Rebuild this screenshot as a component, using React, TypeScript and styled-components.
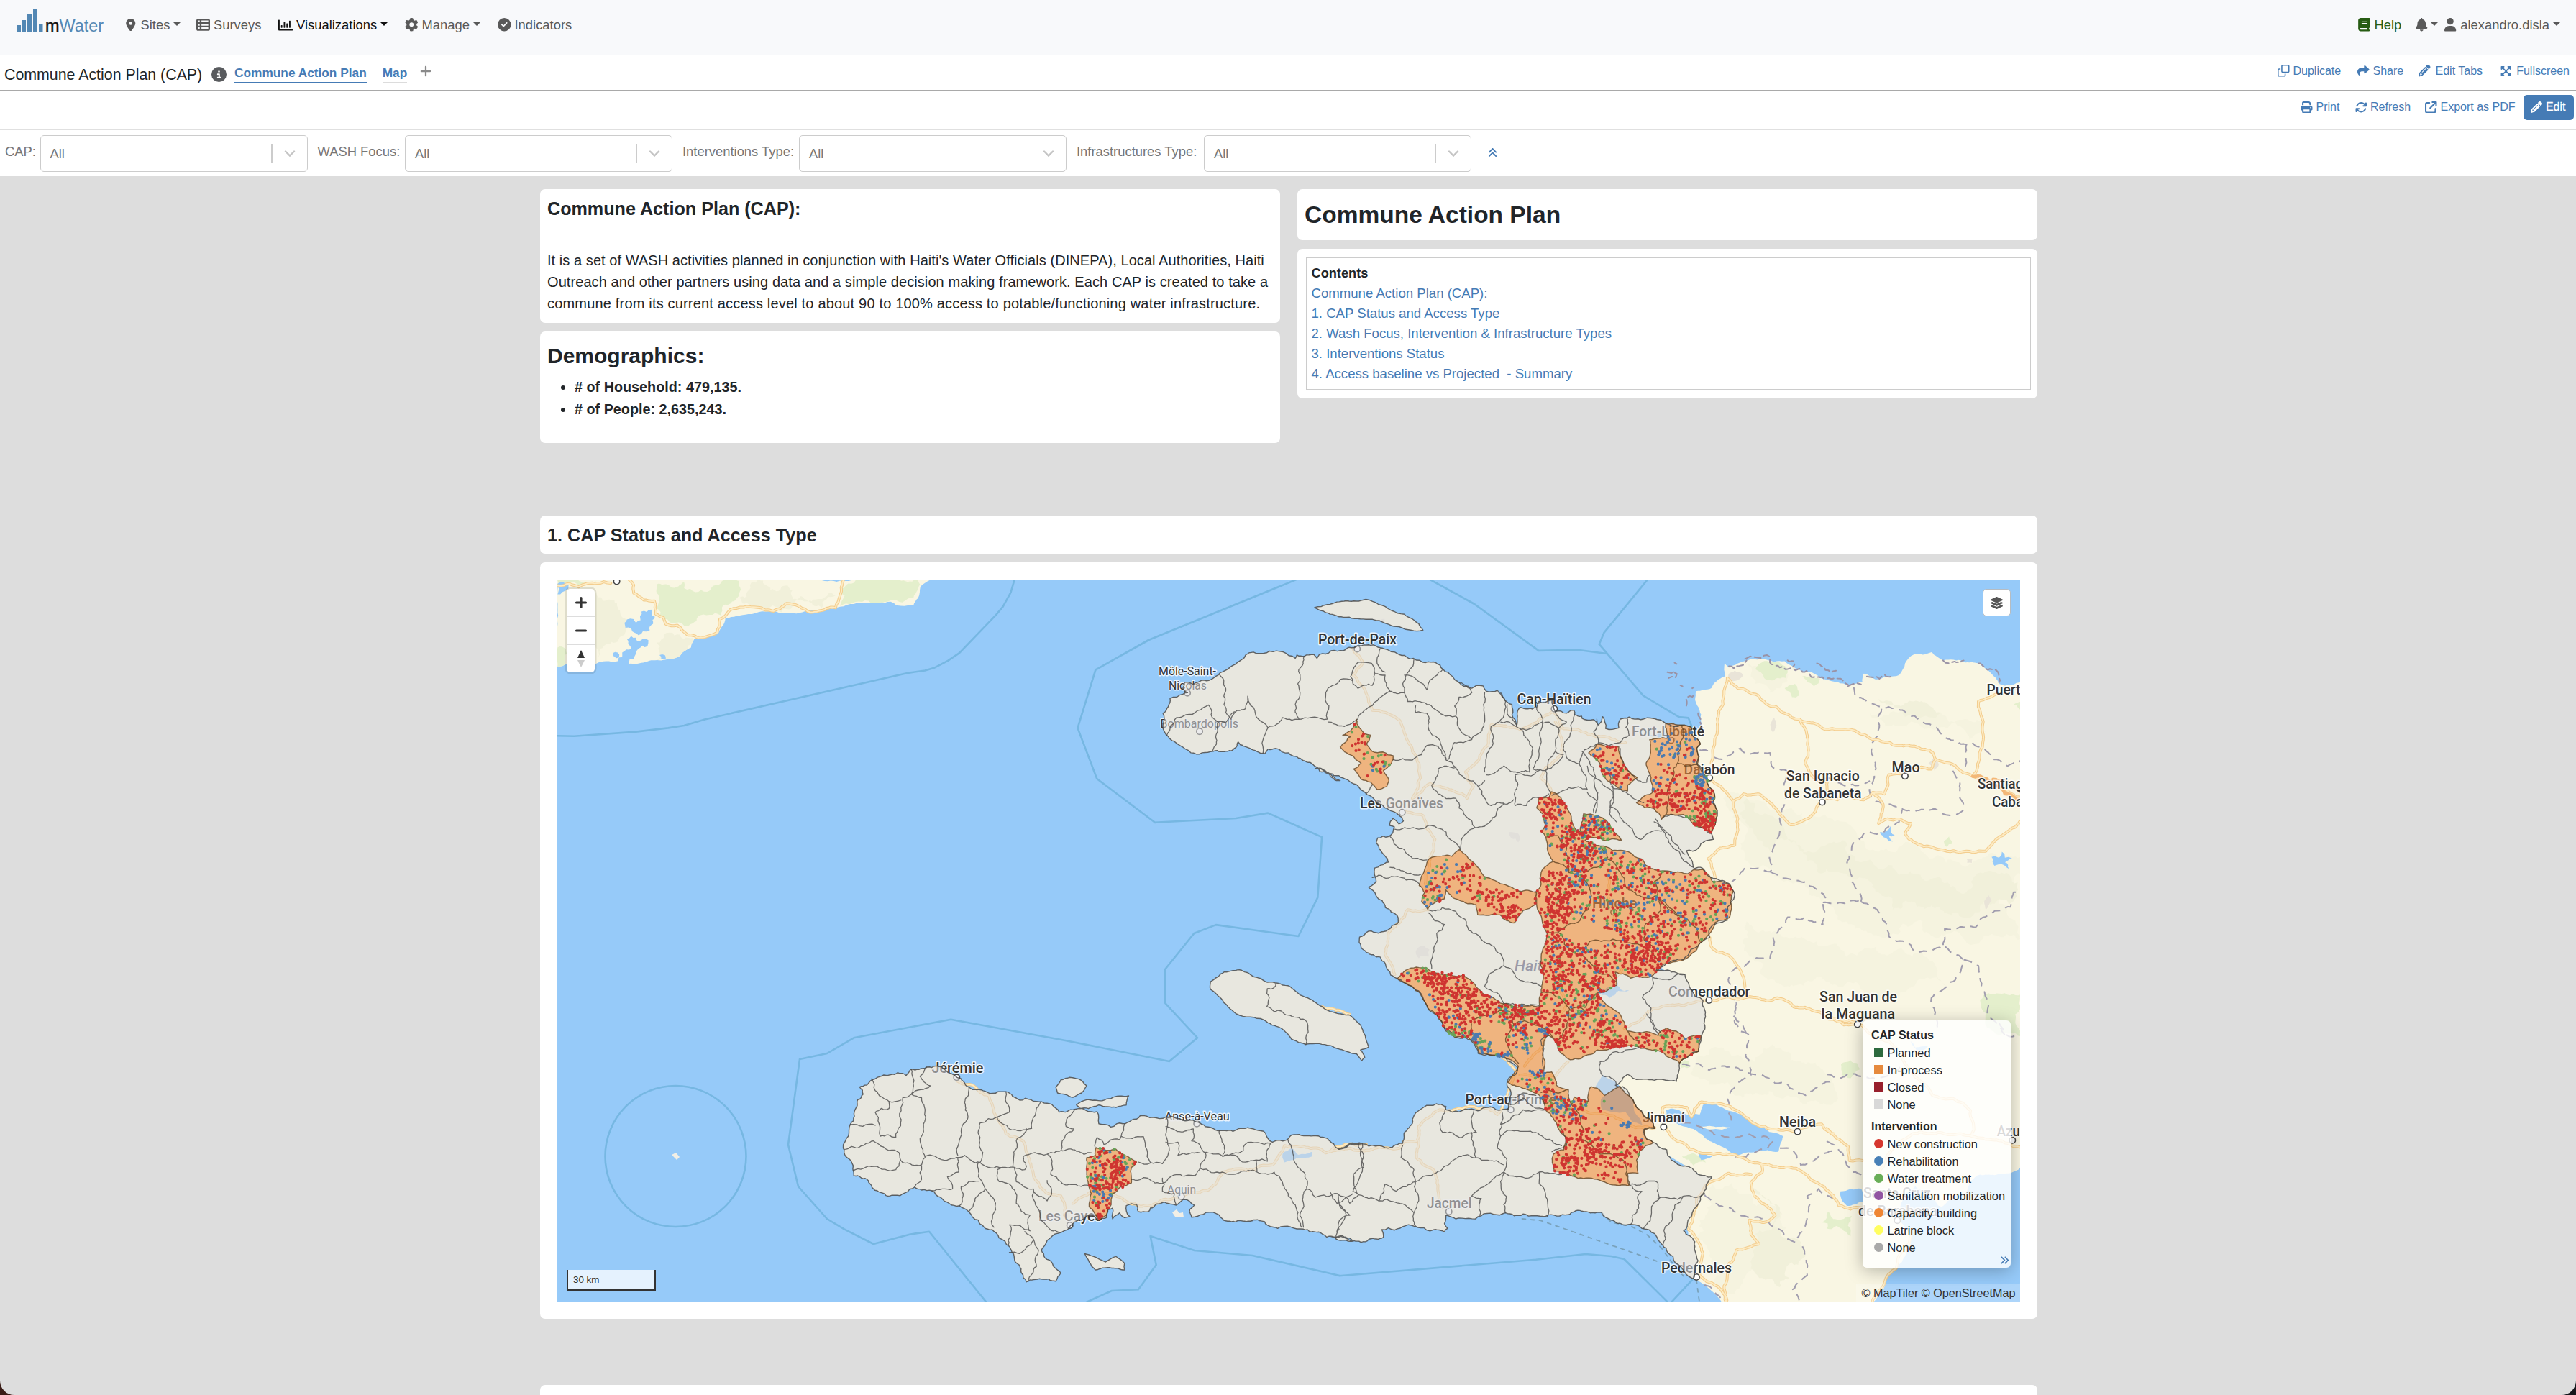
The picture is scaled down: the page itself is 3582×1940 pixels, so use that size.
import React from "react";
import styled, { createGlobalStyle, css } from "styled-components";
import {
  FaLocationDot, FaTableList, FaGear, FaCircleCheck, FaBook, FaBell, FaUser, FaRegClone, FaShare,
  FaPencil, FaPrint, FaArrowsRotate, FaArrowUpRightFromSquare, FaPlus, FaCircleInfo, FaAnglesUp,
  FaAnglesRight, FaLayerGroup,
} from "react-icons/fa6";
import { FaRegChartBar, FaExpandArrowsAlt } from "react-icons/fa";

/* ------------------------------------------------------------------ */
/* Map geometry                                                        */
/* ------------------------------------------------------------------ */

type Pt = [number, number];
type Sheet = (s: string) => Pt[];

const sheet = (ox: number, oy: number, sx: number, sy: number): Sheet => (s) =>
  s.trim().split(/\s+/).map((p) => {
    const [x, y] = p.split(",").map(Number);
    return [ox + x / sx, oy + y / sy] as Pt;
  });

const W = sheet(760, 780, 1.568, 2.904);
const N = sheet(1560, 800, 2.24, 2.45);
const E = sheet(2200, 800, 2.45, 2.45);
const C = sheet(1800, 1050, 2.3758, 2.45);
const S = sheet(1150, 1340, 2.0907, 3);
const P = sheet(1850, 1380, 2.24, 3);
const L = sheet(2540, 1380, 3, 2.8);

const hash = (a: number, b: number) => {
  const v = Math.sin(a * 12.9898 + b * 78.233) * 43758.5453;
  return v - Math.floor(v);
};

// Midpoint displacement, so that coasts and borders get their ragged look.
const split = (a: Pt, b: Pt, amp: number, out: Pt[]) => {
  const dx = b[0] - a[0];
  const dy = b[1] - a[1];
  const len = Math.hypot(dx, dy);
  if (len < 5) {
    out.push(b);
    return;
  }
  const k = (hash(a[0] + b[0], a[1] + b[1]) - 0.5) * amp;
  const m: Pt = [(a[0] + b[0]) / 2 - dy * k, (a[1] + b[1]) / 2 + dx * k];
  split(a, m, amp, out);
  split(m, b, amp, out);
};

const rough = (pts: Pt[], amp = 0.32, closed = false) => {
  const out: Pt[] = [pts[0]];
  for (let i = 1; i < pts.length; i++) split(pts[i - 1], pts[i], amp, out);
  if (closed) split(pts[pts.length - 1], pts[0], amp, out);
  return out;
};

const d = (pts: Pt[], closed = false) =>
  "M" + pts.map((p) => `${p[0].toFixed(1)} ${p[1].toFixed(1)}`).join("L") + (closed ? "Z" : "");
const area = (pts: Pt[], amp = 0.3) => d(rough(pts, amp, true), true);
const lines = (sh: Sheet, list: string[], amp = 0.32) => list.map((s) => d(rough(sh(s), amp))).join("");
const areas = (sh: Sheet, list: string[], amp = 0.4) => list.map((s) => area(sh(s), amp)).join("");

const mainland: Pt[] = [
  ...N("195,365 223,372 250,357 300,340 330,320 360,297 385,272 410,262 440,266 520,274 540,283 545,272 568,276 598,270 608,283 615,270 690,257 715,247 735,240 760,238 790,240 805,247 850,262 880,273 908,283 945,298 978,298 1000,320 1030,345 1050,365 1065,378 1090,385 1105,375 1125,377 1135,395 1170,392 1190,418 1215,440 1215,475 1230,512 1240,450 1265,455 1292,450 1298,430 1340,425 1350,465 1385,470 1408,460 1410,475 1432,480"),
  ...E("0,488 40,492 55,510 70,482 80,522 125,520 130,490 160,483 200,492 285,505 340,511 372,518 375,545 403,575 390,590 392,645 405,655 425,690 432,720 448,735 452,760 445,775 460,800 455,840 440,878 447,900 420,905 395,930 355,938 362,955 382,1000 410,998 440,1030 500,1050 518,1080 510,1110 495,1130 495,1175 460,1185 435,1205 435,1235 400,1255 370,1275 345,1310 310,1312 280,1330 250,1350 290,1345 350,1360 365,1400 385,1435 412,1450"),
  ...C("1355,900 1345,955 1335,1010 1285,1035 1272,1050 1268,1085 1262,1112 1190,1108 1140,1105 1100,1088 1075,1115 1060,1125 1085,1130 1115,1170 1130,1200 1185,1255 1190,1272 1155,1275 1165,1310 1185,1320 1230,1345 1245,1380 1290,1400"),
  ...P("1188,770 1162,838 1130,910 1100,995 1135,1040 1145,1120 1130,1195 1075,1130 1050,1085 1035,1055 970,985 930,968 885,955 845,918 790,915 740,928 670,935 600,925 545,920 470,932 390,945 360,930 355,965 365,985 355,1000 310,995 270,980 200,992 160,990 165,1022 120,1030 95,1043 50,1035 0,1018"),
  ...S("1530,1158 1480,1145 1430,1120 1385,1108 1310,1105 1230,1075 1145,1060 1130,1042 1060,1058 1055,1025 1068,1008 1035,985 1015,1008 980,995 940,1020 935,1035 905,1035 900,1005 870,1010 880,1055 865,1060 850,1040 830,1065 830,1020 815,1025 812,1060 790,1072 770,1050 740,1070 705,1100 672,1125 640,1155 623,1195 655,1250 680,1290 665,1325 580,1328 565,1290 545,1235 530,1180 500,1145 480,1110 440,1070 412,1035 385,1010 330,975 305,948 275,945 255,932 195,967 150,952 120,905 78,885 72,830 47,770 62,720 68,670 85,600 105,545 95,515 130,485 165,465 205,455 230,467 245,440 290,432 345,445 378,475 412,515 460,533 520,535 560,570 625,577 675,620 720,608 785,618 790,668 860,668 910,635 985,640 1050,655 1100,680 1130,695 1180,700 1215,688 1275,708 1295,745 1325,740 1345,722 1400,718 1455,730 1490,775 1520,750 1555,752"),
  ...P("25,655 60,632 100,632 180,650 225,630 240,570 260,515 290,480 330,465 355,475 360,490 440,487 490,480 525,492 555,490 560,445 550,378 580,335 583,312 570,298 500,262 460,255 450,220 420,185 390,187 355,150"),
  ...C("470,885 430,840 390,790 340,762 318,750 300,710 260,680 220,655 215,620 245,600 310,595 340,575 340,548 300,520 270,480 245,450 270,430 265,385 285,375 310,365 285,325 270,300 275,282 310,278 325,265 330,245 315,240 325,215 345,235 360,225 345,205 310,185 270,160 240,135 190,95 130,70 70,45"),
  ...N("680,700 640,675 600,650 560,628 520,605 480,590 455,592 445,608 400,590 362,568 350,590 330,600 285,600 250,605 215,605 180,580 145,550 128,510 128,470 150,420 190,405 205,400 190,385"),
];

const islands: Pt[][] = [
  N("600,110 640,100 700,87 760,82 800,100 880,133 925,165 938,187 900,187 840,172 760,150 690,143 635,127"),
  [
    ...S("1115,75 1155,35 1205,28 1240,55 1280,78 1310,82 1340,92 1390,140 1440,180 1520,215 1550,255"),
    ...C("235,965 245,995 218,1005 232,1030 222,1042 205,1018 180,1012 120,990 40,985"),
    ...S("1392,338 1350,315 1320,270 1270,235 1190,210 1145,145 1115,108"),
  ],
  S("665,515 680,485 705,475 740,488 755,510 740,540 715,558 690,545 670,540"),
  S("725,590 755,568 800,572 850,553 877,552 870,590 840,600 790,590 760,605 735,605"),
  S("748,1208 775,1222 810,1245 840,1222 865,1250 865,1278 780,1278 762,1245"),
];

const haitiPath = area(mainland, 0.3) + islands.map((i) => area(i, 0.16)).join("");

const cubaPath = area(
  W("20,60 840,60 835,78 815,105 810,150 800,180 780,182 765,180 750,165 700,170 640,185 610,195 570,200 545,213 525,212 500,205 440,215 390,232 385,260 375,290 345,310 322,315 315,350 290,385 250,402 180,415 180,385 158,390 155,405 130,405 108,415 24,427"),
  0.15
);

const dominicanPath = d([
  ...rough(E("372,518 405,540 412,520 405,490 400,460 385,425 388,395 440,385 485,345 485,300 500,315 560,290 620,285 690,293 750,330 830,355 910,375 955,365 960,335 1000,355 1080,340 1100,300 1130,270 1190,262 1230,290 1300,295 1350,300 1390,330 1420,370 1500,365"), 0.2),
  ...rough(L("820,675 760,705 700,712 640,710 600,735 580,785 530,795 480,835 465,830 430,790 370,755 320,790 300,880 350,950 330,1020 290,1075 245,1115 240,1150 185,1215"), 0.2),
  ...P("1225,1305 1215,1285 1200,1260 1165,1220 1130,1190 1110,950"),
  ...C("1340,1430 1150,1310 1140,1240 1040,1175 1050,1080 1240,1070 1300,900"),
  ...E("330,1390 240,1310 340,1220 400,1100 360,1010 330,930 430,860 415,760 375,640 345,560"),
], true);

const lakes =
  areas(P, [
    "1045,490 1060,485 1085,490 1110,510 1150,510 1160,470 1180,462 1260,500 1330,550 1410,600 1395,665 1260,682 1180,620 1130,570 1090,555 1050,525",
    "825,395 850,345 885,370 900,390 945,450 945,490 970,550 990,565 940,540 920,500 880,500 845,490 843,445 855,430",
    "1145,670 1190,685 1155,700",
  ], 0.15) +
  areas(E, [
    "1015,875 1035,872 1050,855 1052,875 1065,885 1045,888 1058,908 1035,895",
    "1395,960 1420,962 1430,942 1440,962 1465,965 1440,978 1455,1000 1430,985 1405,990",
    "60,1425 110,1405 120,1385 130,1410 160,1415 95,1440",
    "230,545 280,540 300,548 320,560 290,560",
  ]) +
  areas(S, ["1325,790 1350,770 1370,798 1410,785 1410,805 1370,810 1328,830"], 0.2) +
  areas(L, ["58,775 145,765 150,815 85,832 60,800", "350,190 370,215 430,205 405,225 375,225"], 0.2) +
  areas(W, [
    "170,250 175,237 190,235 195,250 205,240 207,205 228,197 230,220 236,225 225,280 210,285 200,300 185,275 172,270",
    "175,315 195,310 200,325 222,320 220,345 200,355 195,375 190,395 160,405 165,370 185,355 178,335",
    "145,372 155,370 158,390 148,388", "246,380 258,380 260,395 250,397", "24,92 48,98 30,135 24,135",
  ], 0.5);

const lakeIsle = areas(P, ["1150,560 1200,562 1245,563 1220,573 1180,572"], 0.1);

const greens =
  areas(W, [
    "240,95 300,85 300,110 350,125 420,80 415,150 385,180 380,220 330,225 300,262 250,230 245,150",
    "640,120 680,75 810,75 800,150 750,160 640,182 650,140", "24,350 42,355 42,425 24,427", "24,78 110,78 90,95 24,97",
    "390,75 420,75 400,130 385,120",
  ]) +
  areas(E, [
    "590,320 620,292 660,295 700,325 695,350 640,358 620,350", "690,385 725,370 740,410 715,415",
    "750,345 810,352 790,378", "1232,905 1250,890 1262,915 1240,925", "1365,1480 1430,1435 1500,1425 1500,1568 1420,1568",
    "1470,440 1500,425 1500,460",
  ]) +
  areas(L, ["60,280 100,265 140,300 100,335 62,320", "0,880 60,885 105,870 100,950 40,910 0,920", "640,30 720,5 810,10 810,170 720,120 690,90 650,70"]) +
  areas(P, ["1095,685 1130,670 1170,710 1130,722", "1090,290 1118,288 1115,315 1092,315", "1530,960 1550,915 1568,950 1568,980", "1060,780 1080,765 1125,800 1100,815"]);

const hills =
  areas(E, [
    "560,300 640,310 700,360 640,400 590,370", "980,470 1100,440 1250,500 1380,540 1320,560 1180,520", "480,760 640,800 760,850 900,840 1000,940 1240,980 1492,960 1492,1240 1300,1240 1160,1180 1040,1230 900,1180 760,1060 600,1000 560,880",
    "560,1180 760,1240 900,1300 1160,1290 1240,1400 1100,1420 900,1390 700,1400 580,1300",
  ], 0.6) +
  areas(P, ["1180,240 1320,290 1480,300 1568,380 1568,460 1400,440 1250,400 1120,340", "1190,800 1300,840 1420,980 1340,1160 1260,1260 1180,1100 1150,950"], 0.6) +
  areas(W, ["60,150 110,140 160,200 150,330 110,400 60,300", "420,150 520,100 630,140 600,190 480,190", "240,330 320,310 300,380 240,400"], 0.6);

const hills2 =
  areas(E, [
    "700,900 900,910 1010,1000 1180,1040 1400,1010 1480,1080 1330,1160 1140,1130 1000,1080 860,1010",
    "1010,420 1130,430 1220,470 1140,480", "560,760 650,820 700,900 640,940 570,860",
  ], 0.6) + areas(P, ["1300,820 1400,900 1480,1100 1400,1230 1320,1100 1380,960"], 0.6);

const towns =
  areas(E, ["498,340 520,325 548,340 530,358 500,355", "1180,640 1210,620 1215,645 1200,665", "1370,1110 1385,1090 1395,1110 1375,1140", "1310,965 1330,965 1328,980 1312,980", "645,500 655,485 662,510 650,535"], 0.3) +
  areas(N, ["1205,875 1240,890 1235,910 1212,895", "918,1275 935,1262 958,1275 955,1300 925,1305", "790,150 818,148 815,162"], 0.4);

const roadsMain =
  lines(E, [
    "495,350 480,440 460,540 440,640", "495,350 530,385 600,410 690,470 740,490 830,525 1000,560 1080,580 1195,605 1205,628 1250,640 1330,685 1420,720 1500,760",
    "740,490 765,540 760,640 780,680 835,705 835,760", "820,770 790,810 710,850 690,830 640,775 600,745 550,745 515,770 490,738 440,700",
    "820,765 870,765 890,745 960,765 990,740 1030,745 1045,680 1100,678", "1100,655 1190,660 1205,628",
    "990,740 1025,780 1010,845 1040,830 1120,845 1100,880 1130,910 1200,930 1375,940 1410,900 1490,840",
    "515,770 530,850 520,920 470,930 430,965 455,1040", "435,1235 440,1265 500,1295 550,1370 555,1405",
    "432,1448 550,1440 630,1450 665,1440 720,1470 820,1495 940,1525", "1330,685 1365,570 1350,430 1410,405 1500,380",
  ], 0.22) +
  lines(P, [
    "1035,505 1035,480 1055,475 1110,480 1125,520 1150,460 1200,462 1260,490 1300,525 1370,570 1450,580 1530,550 1568,590",
    "1040,560 1080,620 1120,655 1270,685 1340,715 1430,730 1500,785 1568,850",
    "1340,715 1345,750 1310,795 1320,850 1385,930 1350,960 1305,950 1310,1010 1335,1050 1265,1075 1235,1150 1235,1300",
    "1310,760 1240,755 1185,790 1140,860 1115,990 1160,1090 1150,1180 1235,1285",
    "860,510 900,530 950,565 1010,565",
  ], 0.22) +
  lines(L, ["0,530 90,600 95,655 150,655", "0,770 50,830 150,840", "350,950 290,1075 245,1120 190,1210", "0,100 150,130 270,200 350,300 440,400 600,460 605,560 430,550 360,550 220,700", "605,560 700,575 760,590 820,600"], 0.22) +
  lines(W, [
    "172,60 190,98 190,130 212,158 235,162 238,215 255,230 260,255 285,260 310,300 345,308 372,290 378,235 400,198 460,188 495,203 523,172 575,208 610,192 630,190 640,140 648,75",
    "24,100 50,92 70,105 110,90 140,90",
  ], 0.2);

const roadsHaiti =
  lines(N, [
    "720,250 750,300 720,340 760,400 780,460 860,490 905,600 930,690 905,760", "905,760 960,710 1075,760 1095,720 1070,670 1140,580 1150,510 1240,525 1340,465 1370,520 1480,550 1568,570",
    "870,805 940,820 975,900 960,960 955,1080", "955,1140 890,1140 830,1220 820,1290 850,1360", "1340,740 1305,690 1320,655 1370,610 1350,500",
  ], 0.22) +
  lines(C, ["1035,390 1040,500 1060,590 1130,640", "880,740 900,850 830,935 760,1060", "1090,720 1060,760"], 0.25) +
  lines(P, [
    "0,665 60,650 90,660 215,650 230,620 270,620 275,560 340,490 520,510 580,330 510,250", "275,620 268,690 320,740 335,830 350,900",
    "590,345 700,350 740,290", "700,460 800,500 860,510 ", "915,150 990,80 1100,55 1170,35", "650,350 700,460",
  ], 0.22) +
  lines(S, [
    "378,490 470,550 485,620 520,710 570,740 590,830 625,940 680,970 690,1050", "1568,755 1450,790 1330,760 1295,840 1150,870 1130,920 1030,970 940,1010 880,1000 830,960 770,950 715,1000",
    "1440,180 1480,195 1520,212",
  ], 0.22);

const highway = lines(E, ["1330,685 1365,690 1420,720 1440,745 1500,780", "1400,695 1440,700 1500,740"]);

const adminDash =
  lines(E, [
    "925,380 930,415 1020,450 1110,475 1200,515 1290,575 1370,590 1450,650 1500,630", "1020,455 985,600 995,680 980,740 1000,770 1050,780 1100,800 1210,800 1275,815 1300,795 1285,700 1255,645",
    "1310,575 1305,660", "450,620 480,628 540,590 570,610 640,605 645,650 700,670 690,780 680,860 640,950 650,1000 640,1010 560,995 510,1045",
    "640,1010 730,1040 830,1100", "950,1112 915,1040 920,920 960,880 1010,880 1080,840 1090,800", "820,1115 950,1112", "820,1120 820,1190 700,1165 650,1230 640,1305 580,1310 520,1340 500,1370 525,1420 515,1500 560,1568",
    "950,1112 1020,1155 1045,1230 1120,1260 1140,1285 1230,1260 1300,1310 1290,1350 1190,1440 1210,1540", "1300,1310 1350,1330 1360,1400 1380,1490 1440,1568",
    "1230,1260 1235,1205 1340,1200 1390,1155 1460,1130 1470,1080 1500,1085", "780,680 860,700 900,720 980,700", "400,595 450,600",
  ], 0.3) +
  lines(P, [
    "1250,0 1260,130 1305,180 1310,345 1265,380 1250,540", "1095,300 1180,325 1290,330 1420,380 1480,430 1568,370", "1095,545 1150,560 1350,600 1380,620 1260,685",
    "1400,650 1440,660 1465,720 1568,665", "1165,845 1210,890 1270,925 1310,940 1400,990 1450,1045 1480,970 1485,850 1520,820 1568,860", "1470,1060 1485,1180 1440,1240 1460,1285",
    "1165,1220 1215,1275",
  ], 0.3) +
  lines(L, ["0,320 120,318 200,335 300,300 330,270", "0,580 40,600 80,660 110,700 150,720", "720,120 740,160 800,170"], 0.3);

const maritime =
  d(W("15,706 60,708 195,690 265,675 300,665 345,640 790,452 825,443 845,432 875,403 900,372 980,218 995,185 1012,128 1022,65")) +
  d([
    ...N("560,8 543,15 85,220 0,272"), ...W("1312,320 1197,440 1158,675 1200,880 1327,1057"),
    ...N("102,842 355,828 455,810 623,892 610,1098 550,1230 293,1191 225,1220 135,1342 135,1458"),
    ...S("1077,310 995,408 690,320 360,233 78,310 0,375"), [1112, 1473], [1096, 1592], [1110, 1650], ...S("0,1065 50,1108 135,1170 240,1130 297,1118 470,1425"),
  ]) +
  d([...N("940,0 960,15 1098,98 1298,257 1420,254 1510,267")]) +
  d(E("235,0 75,195 58,235 208,410 330,483 362,486 375,520")) +
  d([...S("735,1425 828,1365 905,1360 957,1257 940,1137 1068,1197 1237,1218 1490,1302"), ...P("28,1183 640,1115 795,1092 875,1101 915,1113 1060,1305")]) +
  d(P("1050,1310 1130,1195"));

const ferry = d(P("597,945 655,952 860,1048 1035,1130")) + d(P("845,920 875,960 935,975 985,1010 1030,1065 1060,1120 1110,1200")) + d(P("1140,1200 1150,1300"));

const reefs = lines(E, [
  "290,330 315,325 318,348 295,350", "315,298 322,302", "335,375 342,378", "375,385 380,382", "555,285 630,272 640,290", "700,290 725,300 718,312", "800,300 865,325",
  "355,445 385,400", "395,470 402,500 410,520", "640,288 740,318 830,352 905,372", "905,378 950,372", "970,345 1055,345", "500,310 560,290", "1230,290 1250,300 1300,290", "1350,300 1420,365",
], 0.6);

const borders =
  lines(N, [
    "303,337 318,440 340,490 360,460 385,455 392,412 410,450 425,490 455,520 440,605", "140,545 170,485 200,475 270,442 300,500 325,500 350,465", "300,500 283,598",
    "455,520 500,485 560,490 640,490", "568,276 548,370 555,400 540,440 552,490", "640,490 645,445 635,400 680,355 720,360",
    "735,297 778,300 788,335 780,375 735,385 720,370 712,345 735,297", "788,335 820,340 835,395 800,420 755,460 735,490 710,508 643,500",
    "805,250 795,300 820,330", "910,285 885,340 880,400 835,395", "1000,320 975,345 950,390 880,340",
    "880,400 890,430 950,440 1000,475 1040,480 1050,415 1090,400 1050,365", "915,445 915,468 950,470 955,520 985,555 1010,630 1040,655 1110,720 1130,700",
    "1040,480 1045,510 1090,560 1110,540 1130,480 1130,400", "1090,560 1035,570 1015,630", "1180,400 1195,430 1175,500 1150,515 1145,590 1130,670",
    "1180,500 1245,525 1265,560 1280,590 1270,670 1220,670 1190,650 1165,670 1135,680", "1310,505 1300,590 1280,660 1320,665 1350,600 1360,520 1330,500 1310,505",
    "1240,525 1310,500", "1230,512 1205,480 1200,440", "1292,450 1310,505", "1350,465 1385,500 1360,520", "1410,475 1395,550 1375,590 1385,620 1425,645 1440,595 1480,575", "1350,600 1375,610 1320,665 1335,740", "1425,645 1450,730 1340,750",
    "1450,740 1480,770 1470,810", "1450,650 1490,700 1530,740 1520,800 1540,840", "905,630 845,628", "905,630 950,580 985,583 1010,630", "760,745 780,715",
    "1040,655 985,660 965,715 985,745 1040,760 1070,820 1100,860 1060,895 1055,935", "1225,680 1225,785 1260,785 1330,745", "1110,720 1150,785 1200,780 1220,765",
    "1225,680 1300,665", "1190,775 1165,820 1130,855 1100,860", "850,865 880,860 925,865 950,855 1010,875 1055,935", "835,890 870,930 905,965 950,970",
    "835,995 880,1010 930,1020", "780,1030 800,1022 830,1032 870,1030 930,1060", "955,1150 1005,1190 975,1260 965,1340",
    "955,1140 1040,1145 1080,1210 1130,1250 1180,1290 1190,1330 1240,1380 1305,1400", "1190,1330 1140,1370 1130,1400", "1130,1400 1190,1460 1300,1468",
  ]) +
  lines(E, [
    "50,490 55,575", "155,490 160,545 130,570 50,575", "0,600 40,655 50,770 45,810", "130,590 150,660 190,700 220,705 232,680",
    "65,655 105,720 95,790 150,845 200,900 250,870 275,870", "100,720 150,740 210,775", "245,840 275,870 330,940 380,995", "250,830 260,855 330,930 350,950", "275,825 330,820 440,880",
    "350,1360 240,1370 235,1410 205,1440 235,1475 235,1500 260,1568",
  ]) +
  lines(P, [
    "360,475 340,545 350,585 455,585 440,540 447,490", "440,585 453,690 490,700 540,720", "225,640 220,690 260,740 265,790 300,765 400,685 453,690",
    "100,632 100,735 70,830 150,870 200,875 260,920", "265,790 205,830 170,800 150,870", "0,835 20,880 50,930 20,1000", "20,880 70,840",
    "265,790 275,870 260,920 270,980", "540,750 530,790 545,920", "440,850 470,860 465,930", "440,850 500,790 540,750", "540,750 580,770 650,750 670,840 675,935",
    "535,550 530,600 520,650 550,700 540,750", "530,600 600,580 660,600 720,640", "535,500 530,550 600,490 670,490", "650,750 720,760", "720,570 735,640 690,665",
    "930,800 970,830 960,900 935,968", "930,800 1020,795 1025,860 1000,910 975,985", "1020,860 1100,850 1165,838", "1100,850 1065,940 1035,1055",
    "550,440 600,420 640,430", "560,470 600,440 670,490", "840,290 880,250 960,230", "840,290 850,350 890,380", "985,90 1030,170", "655,340 655,200 680,180",
  ]) +
  lines(S, [
    "1305,82 1300,100 1280,105 1278,180 1300,200 1340,215 1390,235 1392,338",
    "245,440 250,520 245,545 220,560 215,600 205,700 200,725 155,720 140,620 180,605 180,575 140,530 130,480", "290,432 270,470 300,510 245,545 275,560 275,720 285,810 275,840 220,830 210,790 180,780 135,740 95,765 50,775",
    "68,672 140,675", "75,865 200,860 212,825", "180,575 215,570", "275,845 275,900 255,932", "412,515 400,580 410,640 390,700 380,800", "285,805 340,820 400,800 445,830",
    "380,810 382,870 350,890 365,940 305,948", "520,535 530,620 495,640 445,665 445,830", "495,640 530,690 595,688 620,580", "720,610 695,680 718,690 690,730 680,780",
    "445,830 510,850 575,860 570,805 640,795 680,780 770,790", "580,690 550,740 540,850", "440,830 440,890 460,940 490,1000 485,1100", "385,1010 390,930 440,908",
    "460,940 430,990 412,1035", "545,855 550,910 600,940 640,990 650,970 640,905", "510,850 495,860 500,910 530,920 550,1000 590,1050 590,1115", "672,1120 600,940", "590,1115 530,1090 527,1175", "575,1118 600,1150 615,1195 585,1325",
    "530,1205 560,1210 600,1155", "640,795 650,880 680,910 760,925", "780,770 785,725 805,755 850,735 855,720 865,670", "855,720 920,722 940,830 975,835 990,740 985,640",
    "905,828 940,832", "985,680 1065,690 1060,740 1100,790 1085,850 1070,885 885,900", "985,745 1020,745 1020,800 1085,790", "1140,697 1155,770 1150,805 1210,780 1215,755 1290,750 1280,825 1155,800",
    "1095,790 1150,805", "1085,855 1150,870 1250,870 1248,825", "1250,870 1300,870 1350,980 1380,1100", "975,895 975,950 1010,960 1015,1005",
    "1340,735 1360,830 1390,880 1395,940 1420,975 1485,960 1520,1000 1545,965", "1385,1100 1385,1000 1395,940", "1480,1145 1490,1070 1520,1050 1490,1010 1485,960", "1545,965 1530,880 1560,850 1545,750",
  ]);

const zones: Pt[][] = [
  N("730,490 740,520 755,540 775,545 762,575 780,600 845,615 840,640 815,665 832,700 825,720 795,730 775,705 745,695 722,660 745,640 700,605 680,585 712,550 688,545 712,530"),
  E("50,575 125,585 135,625 155,665 188,690 155,715 155,735 95,705 70,680 60,640 22,605"),
  E("285,505 340,510 372,518 375,545 403,575 390,590 392,645 425,690 432,720 448,735 452,760 445,775 460,800 455,840 440,878 380,850 345,815 285,815 270,832 245,795 185,775 215,750 240,740 235,690 218,640 232,610 230,560 290,555"),
  C("848,125 880,145 900,180 915,220 930,255 945,262 955,200 1000,205 1040,235 1080,290 1020,290 980,280 960,290 1010,310 1050,325 1085,325 1150,355 1160,375 1210,395 1300,405 1320,390 1350,390 1380,430 1435,440 1450,465 1440,500 1435,555 1390,570 1370,610 1340,640 1300,690 1250,705 1215,715 1185,750 1110,760 1085,745 1060,740 1065,785 1030,805 1000,810 1045,860 1090,910 1100,940 1140,945 1200,955 1230,930 1260,940 1290,965 1342,955 1335,1010 1285,1035 1272,1050 1220,1015 1120,990 1000,1005 980,1020 910,1038 870,1000 860,970 835,955 820,1000 820,1085 850,1080 865,1125 905,1140 915,1190 925,1165 970,1180 980,1130 1000,1135 1025,1160 1075,1128 1115,1170 1130,1200 1185,1255 1190,1272 1155,1275 1165,1310 1185,1320 1140,1350 1130,1380 1135,1425 1100,1425 1105,1468 1060,1465 990,1445 920,1435 858,1418 855,1360 890,1345 895,1300 870,1270 830,1210 810,1160 770,1140 720,1125 705,1115 725,1085 740,1060 730,1050 700,1035 610,1015 590,975 570,960 530,962 500,940 470,885 430,840 390,790 340,762 360,740 430,725 560,750 600,790 680,845 760,855 810,858 815,800 815,690 835,610 820,575 800,510 795,470 815,440 815,400 855,362 835,320 830,280 815,260 830,240 820,200 800,180 805,150 840,145"),
  C("440,360 455,348 520,345 545,322 570,345 620,405 690,440 750,465 800,465 795,510 755,530 725,572 680,545 605,545 600,510 545,495 500,460 495,490 440,525 420,500 430,470 412,445 430,390"),
  S("783,768 840,775 865,800 900,828 885,850 885,915 830,960 812,1050 790,1072 762,1015 768,960 755,880 755,810 780,800"),
];

const zonePath = zones.map((z) => area(z, 0.22)).join("");

const zoneBorders =
  lines(C, [
    "855,362 900,385 905,400 970,395 1035,350 1010,310", "830,280 870,275 905,350 905,400", "905,400 930,405 975,450 975,510 935,570 870,605 840,605", "870,605 925,675 975,635 1050,628 1100,640 1160,660 1200,700",
    "1035,355 1090,420 1105,460 1160,487 1200,475 1190,430 1215,395", "1200,485 1260,545 1330,590 1340,635", "1205,490 1210,530 1160,575 1155,630 1200,665", "1205,490 1230,510 1265,548",
    "815,810 880,830 910,870 960,860 1000,810", "580,905 680,870 690,850", "580,905 575,960", "905,870 900,930 870,975", "680,870 720,880 725,920 760,905 830,935 860,970",
    "725,920 700,960 715,1020 740,1050", "925,675 960,690 1000,740 1060,770", "910,1180 945,1240 945,1310 1010,1360 1090,1385 1105,1468", "815,1150 850,1145 905,1140", "1000,820 940,860 970,880", "1090,920 1140,975",
  ]) + lines(E, ["340,510 335,580 325,640 350,650 392,645", "325,640 310,660 290,740 290,800 270,832"]);

const inside = (p: Pt, poly: Pt[]) => {
  let hit = false;
  for (let i = 0, j = poly.length - 1; i < poly.length; j = i++) {
    const [xi, yi] = poly[i];
    const [xj, yj] = poly[j];
    if (yi > p[1] !== yj > p[1] && p[0] < ((xj - xi) * (p[1] - yi)) / (yj - yi) + xi) hit = !hit;
  }
  return hit;
};

// Clusters: centre, radii, number of points, share of red and of blue (rest is green).
type Cluster = [number, number, number, number, number, number, number];
const clusters: [Sheet, Cluster[]][] = [
  [C, [
    [845, 175, 50, 40, 60, 0.9, 0.05], [875, 250, 55, 70, 75, 0.65, 0.2], [935, 330, 55, 75, 170, 0.66, 0.18], [1005, 240, 70, 50, 120, 0.42, 0.18],
    [1000, 330, 60, 40, 50, 0.4, 0.35], [860, 480, 65, 80, 150, 0.93, 0.03], [875, 510, 40, 50, 60, 0.95, 0.03], [935, 490, 40, 80, 60, 0.35, 0.4], [850, 580, 50, 30, 40, 0.95, 0.02],
    [865, 690, 55, 90, 140, 0.82, 0.06], [1010, 430, 80, 60, 60, 0.5, 0.22], [1130, 390, 90, 60, 90, 0.6, 0.17], [1180, 460, 50, 40, 40, 0.7, 0.15], [1260, 450, 80, 60, 60, 0.35, 0.38],
    [1390, 450, 70, 60, 70, 0.65, 0.18], [1360, 560, 90, 50, 50, 0.45, 0.28], [1270, 590, 100, 70, 85, 0.78, 0.13], [1140, 560, 110, 70, 120, 0.55, 0.22], [1060, 530, 90, 60, 60, 0.45, 0.2],
    [1170, 650, 90, 50, 90, 0.92, 0.04], [1165, 705, 70, 55, 120, 0.85, 0.08], [1040, 690, 110, 50, 100, 0.75, 0.12], [940, 720, 90, 80, 120, 0.74, 0.08],
    [920, 830, 110, 60, 150, 0.66, 0.12], [1010, 770, 60, 30, 30, 0.9, 0.05], [430, 750, 80, 25, 50, 0.75, 0.08], [455, 765, 30, 25, 50, 1, 0], [540, 785, 70, 40, 90, 0.95, 0.02],
    [520, 850, 120, 60, 110, 0.88, 0.06], [630, 840, 60, 40, 60, 0.95, 0.02], [490, 880, 60, 50, 30, 0.5, 0.4], [540, 940, 45, 25, 45, 0.5, 0.15], [590, 960, 25, 15, 20, 0, 0.9],
    [620, 995, 35, 22, 34, 0.05, 0.55], [690, 1022, 28, 12, 24, 0.3, 0.45], [650, 890, 90, 25, 34, 0.8, 0.05], [730, 870, 60, 25, 60, 0.4, 0.1], [780, 900, 90, 40, 100, 0.78, 0.08],
    [740, 960, 40, 40, 36, 0.65, 0.22], [768, 985, 15, 30, 16, 0.05, 0.75], [825, 940, 18, 12, 18, 0, 0.9], [880, 950, 50, 50, 70, 0.95, 0.02], [990, 880, 80, 80, 80, 0.55, 0.17],
    [1040, 950, 60, 50, 70, 0.62, 0.14], [1060, 990, 50, 20, 50, 0.98, 0.01], [950, 980, 90, 40, 30, 0.95, 0], [1240, 980, 110, 50, 110, 0.65, 0.08], [795, 1085, 30, 15, 16, 0.1, 0.7],
    [790, 1120, 60, 30, 34, 0.5, 0.25], [845, 1180, 45, 40, 60, 0.35, 0.5], [910, 1220, 45, 40, 50, 0.55, 0.35], [930, 1190, 40, 20, 25, 0.5, 0.2], [910, 1280, 60, 50, 40, 0.97, 0.01], [1000, 1240, 60, 70, 18, 0.5, 0.1],
    [950, 1340, 90, 40, 90, 0.97, 0], [910, 1400, 60, 30, 60, 0.92, 0], [1030, 1370, 80, 40, 70, 0.97, 0], [1110, 1350, 50, 50, 50, 0.85, 0.03], [1090, 1260, 22, 10, 12, 0, 1], [1040, 1440, 60, 20, 14, 1, 0], [1140, 1320, 20, 10, 6, 0, 0.5],
    [650, 500, 60, 40, 45, 0.88, 0], [715, 540, 45, 30, 50, 0.95, 0], [600, 420, 60, 40, 26, 0.85, 0], [500, 420, 60, 60, 45, 0.35, 0.38], [700, 470, 90, 20, 24, 1, 0], [450, 470, 35, 50, 36, 0.2, 0.55], [570, 375, 20, 14, 8, 1, 0],
  ]],
  [E, [
    [105, 650, 80, 70, 85, 0.65, 0.15], [290, 580, 45, 45, 36, 0, 0.97], [265, 680, 50, 60, 26, 0.6, 0.38], [250, 760, 40, 30, 34, 0.95, 0.03], [370, 590, 30, 60, 26, 0.15, 0.6], [350, 720, 60, 60, 50, 0.85, 0.05],
    [320, 775, 22, 30, 44, 1, 0], [400, 790, 60, 60, 90, 0.93, 0.03], [405, 695, 22, 22, 36, 0.05, 0.6], [430, 760, 25, 40, 30, 0.25, 0.4], [440, 820, 20, 20, 26, 0.1, 0.05], [430, 850, 40, 25, 50, 0.95, 0], [365, 835, 30, 18, 12, 0, 0],
  ]],
  [N, [[730, 540, 50, 40, 14, 0.75, 0], [745, 590, 60, 40, 8, 1, 0], [805, 650, 30, 22, 18, 0.1, 0.1], [785, 630, 40, 40, 12, 0.5, 0.05], [760, 690, 10, 8, 1, 1, 0]]],
  [S, [[810, 800, 70, 50, 55, 0.65, 0.05], [800, 880, 60, 60, 50, 0.78, 0.05], [845, 870, 20, 50, 55, 1, 0], [780, 890, 25, 12, 12, 0.2, 0.3], [870, 830, 40, 30, 20, 0.2, 0.35], [820, 920, 60, 25, 40, 0.88, 0.05], [795, 965, 35, 40, 36, 0.15, 0.45], [800, 1030, 25, 50, 24, 0.95, 0]]],
];

const dotPaths = (() => {
  const out = { r: "", g: "", b: "" };
  let seed = 7;
  const rnd = () => {
    seed = (seed * 16807) % 2147483647;
    return seed / 2147483647;
  };
  clusters.forEach(([sh, list]) =>
    list.forEach(([cx, cy, rx, ry, n, red, blue]) => {
      const count = Math.round(n * 0.8);
      for (let i = 0; i < count; i++) {
        for (let tries = 0; tries < 8; tries++) {
          const a = rnd() * Math.PI * 2;
          const q = Math.sqrt(rnd()) * 1.08;
          const p = sh(`${cx + Math.cos(a) * q * rx},${cy + Math.sin(a) * q * ry}`)[0];
          if (!zones.some((z) => inside(p, z))) continue;
          const t = rnd();
          const key = t < red ? "r" : t < red + blue ? "b" : "g";
          out[key] += `M${p[0].toFixed(1)} ${p[1].toFixed(1)}h.01`;
          break;
        }
      }
    })
  );
  return out;
})();

type Label = [string, number, number, number | null, ("big" | "small" | "country")?];
const labels: Label[] = [
  ["Port-de-Paix", 1833, 896.2, 109], ["Cap-Haïtien", 2109.5, 979.2, 103], ["Môle-Saint-", 1611, 938.6, 80, "small"], ["Nicolas", 1625, 959, 53, "small"],
  ["Bombardopolis", 1613.6, 1012, 108.5, "small"], ["Les Gonaïves", 1891, 1124, 116], ["Fort-Liberté", 2269, 1023.6, 101], ["Dajabón", 2341.6, 1076.5, 71],
  ["San Ignacio", 2483.7, 1085.6, 102], ["de Sabaneta", 2481, 1110, 107.5], ["Mao", 2630.6, 1073.5, 39], ["Puert", 2762.4, 965.5, 47], ["Santiag", 2750, 1097, 63], ["Caba", 2770, 1122, 43],
  ["Hinche", 2214, 1262.5, 62.5], ["Haiti", 2106, 1349.5, 44, "country"], ["Comendador", 2320, 1385.7, 113.5], ["San Juan de", 2530, 1392.7, 108], ["la Maguana", 2532.6, 1417, 102.5],
  ["Jérémie", 1295.4, 1492, 72], ["Anse-à-Veau", 1619.7, 1557.6, 90, "small"], ["Aquin", 1623, 1660, 40, "small"], ["Les Cayes", 1444, 1698, 88.5], ["Jacmel", 1984, 1679.6, 62.5],
  ["Port-au-Prince", 2037.5, 1536.3, 127], ["Jimaní", 2284, 1561, 58.5], ["Neiba", 2474, 1567.4, 51], ["Pedernales", 2310, 1769.6, 98], ["Azu", 2776.7, 1580, 32],
  ["Santa Cruz", 2591, 1665.7, 94], ["de Barahona", 2584, 1690.7, 110],
];

const markers: Pt[] = [
  ...N("733,251 204,401 242,532 873,808 1347,455"), ...E("434,690 818,773 1100,684 108,1148 432,1448 938,1530 303,562"), ...S("377,475 1075,668 1030,972 706,1092"),
  ...P("369,915 1038,562 1455,581 1140,1188 562,490"), ...L("775,576 295,888"), ...W("153,83"),
];

const LabelText = styled.text<{ $kind?: string }>`
  font-family: Roboto, "Liberation Sans", sans-serif;
  font-size: ${(p) => (p.$kind === "small" ? 16 : 19.5)}px;
  font-weight: ${(p) => (p.$kind === "small" ? 400 : 500)};
  font-style: ${(p) => (p.$kind === "country" ? "italic" : "normal")};
  fill: ${(p) => (p.$kind === "country" ? "#4c4a66" : "#333")};
  stroke: rgba(255, 255, 255, 0.8);
  stroke-width: ${(p) => (p.$kind === "country" ? 0 : 3)}px;
  stroke-linejoin: round;
  paint-order: stroke;
`;

const Chart = styled.svg`
  display: block;
  width: 100%;
  height: 100%;
`;

function HaitiMap() {
  return (
    <Chart viewBox="775 806 2034 1004" preserveAspectRatio="none" fill="none" strokeLinejoin="round" strokeLinecap="round">
      <defs>
        <mask id="outside-zones" maskUnits="userSpaceOnUse" x="775" y="806" width="2034" height="1004">
          <rect x="775" y="806" width="2034" height="1004" fill="#fff" />
          <path d={zonePath} fill="#000" />
        </mask>
        <clipPath id="land"><path d={dominicanPath} /></clipPath>
        <clipPath id="land-west"><path d={cubaPath} /></clipPath>
      </defs>
      <rect x="775" y="806" width="2034" height="1004" fill="#96caf9" />
      <g fill="#f9f6e3">
        <path d={cubaPath} />
        <path d={dominicanPath} />
        <path d={haitiPath} />
      </g>
      <g clipPath="url(#land)">
        <path d={hills} fill="#f5f3df" />
        <path d={hills2} fill="#f1f0da" />
        <path d={greens} fill="#e4efcc" />
      </g>
      <g clipPath="url(#land-west)">
        <path d={hills} fill="#f1f0da" />
        <path d={greens} fill="#e4efcc" />
      </g>
      <path d={towns} fill="#e9e4d8" />
      <path d={lakes} fill="#96caf9" />
      <path d={lakeIsle} fill="#f9f6e3" />
      <path d={maritime} stroke="#76b7e2" strokeWidth="2.6" />
      <circle cx="939.5" cy="1608" r="98" stroke="#76b7e2" strokeWidth="2.6" />
      <path d="M934 1606l6-3 5 6-4 4z" fill="#f2efe6" />
      <path d="M1630 1686l6-4 4 5 5-1 1 7-12-1z" fill="#f2efe6" />
      <path d={ferry} stroke="#7aa2bb" strokeWidth="1.8" strokeDasharray="5 7" />
      <path d={reefs} stroke="#9a93a6" strokeWidth="2" strokeDasharray="9 5" />
      <path d={adminDash} stroke="#a19dae" strokeWidth="2" strokeDasharray="12 8" strokeLinecap="butt" />
      <path d={roadsMain + roadsHaiti} stroke="#f3cd8e" strokeWidth="4" />
      <path d={roadsMain + roadsHaiti} stroke="#fdebc3" strokeWidth="1.9" />
      <path d={highway} stroke="#f3b877" strokeWidth="4.4" />
      <g fill="#fff" stroke="#444" strokeWidth="1.6">
        {markers.map((m, i) => <circle key={i} cx={m[0]} cy={m[1]} r="4.2" />)}
      </g>
      {labels.map(([t, x, y, w, kind]) => (
        <LabelText key={t} x={x} y={y} textLength={w ?? undefined} lengthAdjust="spacingAndGlyphs" $kind={kind}>{t}</LabelText>
      ))}
      <g mask="url(#outside-zones)">
        <path d={haitiPath} fill="#dadadc" fillOpacity="0.55" />
      </g>
      <path d={zonePath} fill="#e8893c" fillOpacity="0.6" />
      <path d={haitiPath} stroke="#4a4a4a" strokeOpacity="0.85" strokeWidth="1.4" />
      <path d={borders} stroke="#4a4a4a" strokeOpacity="0.8" strokeWidth="1.3" />
      <path d={zonePath + zoneBorders} stroke="#5a3c1c" strokeOpacity="0.75" strokeWidth="1.4" />
      <g strokeWidth="4.2">
        <path d={dotPaths.g} stroke="#68a357" />
        <path d={dotPaths.b} stroke="#4a7ab0" />
        <path d={dotPaths.r} stroke="#cf3430" />
      </g>
    </Chart>
  );
}

/* ------------------------------------------------------------------ */
/* Page                                                                */
/* ------------------------------------------------------------------ */

const Global = createGlobalStyle`
  * { box-sizing: border-box; }
  body {
    margin: 0;
    background: linear-gradient(90deg, #3a1d17, #16181d);
    font-family: "Liberation Sans", Arial, Helvetica, sans-serif;
    color: #212529;
  }
`;

const blue = "#457bb5";

const Page = styled.div`
  display: flex;
  flex-direction: column;
  width: 3582px;
  height: 1940px;
  overflow: hidden;
  background: #ddd;
  border-radius: 0 0 20px 20px;
`;

const Navbar = styled.header`
  display: flex;
  flex: none;
  align-items: center;
  height: 77px;
  padding: 0 22px 7px 23px;
  background: #f8f9fb;
  border-bottom: 1.5px solid #dee2e6;
`;

const Brand = styled.div`
  display: flex;
  align-items: flex-end;
  width: 150px;
  height: 41px;
  padding-bottom: 6px;
  font-size: 23.4px;
  line-height: 25px;
  color: #5388b4;
  svg { display: block; margin-right: 3px; margin-bottom: 5px; }
  span { color: #111; -webkit-text-stroke: 0.5px #111; }
`;

const NavItem = styled.a<{ $x: number; $active?: boolean; $color?: string; $gap?: number }>`
  display: flex;
  flex: none;
  align-items: center;
  gap: ${(p) => p.$gap ?? 5}px;
  width: ${(p) => p.$x}px;
  font-size: 18.4px;
  line-height: 28px;
  white-space: nowrap;
  color: ${(p) => p.$color ?? (p.$active ? "#111" : "#595959")};
`;

const Caret = styled.i<{ $gap?: number }>`
  border: 5px solid transparent;
  border-top: 5.5px solid currentColor;
  border-bottom: 0;
  margin-top: -2px;
  margin-left: ${(p) => p.$gap ?? 0}px;
`;

const Grow = styled.div`
  flex: 1;
`;

const TitleBar = styled.div`
  display: flex;
  flex: none;
  align-items: center;
  height: 49px;
  padding: 0 9px 5px 6px;
  background: #fff;
  border-bottom: 1.5px solid #a9a9a9;
`;

const PageTitle = styled.h1`
  display: flex;
  align-items: center;
  gap: 13px;
  width: 320px;
  margin: 10px 0 0;
  font-size: 21.35px;
  font-weight: 400;
  line-height: 28px;
  white-space: nowrap;
  svg { color: #595b5e; }
`;

const Tab = styled.a<{ $active?: boolean }>`
  margin: 6px 22px 0 0;
  font-size: 17.3px;
  font-weight: 700;
  line-height: 26px;
  color: ${blue};
  border-bottom: 2px solid ${(p) => (p.$active ? blue : "#dcdcdc")};
`;

const AddTab = styled.span`
  display: flex;
  margin: 1px 0 0 -5px;
  color: #8a8a8a;
`;

const Action = styled.a<{ $w: number; $gap?: number }>`
  display: flex;
  flex: none;
  align-items: center;
  gap: ${(p) => p.$gap ?? 5}px;
  width: ${(p) => p.$w}px;
  font-size: 16px;
  line-height: 24px;
  white-space: nowrap;
  color: ${blue};
`;

const Toolbar = styled.div`
  display: flex;
  flex: none;
  justify-content: flex-end;
  align-items: center;
  height: 55px;
  padding: 0 3px 8px 0;
  background: #fff;
  border-bottom: 1px solid #e0e0e0;
`;

const EditButton = styled.button`
  display: flex;
  align-items: center;
  gap: 5px;
  width: 70px;
  height: 35px;
  padding: 0 10px;
  font: 15.9px/24px "Liberation Sans", Arial, sans-serif;
  color: #fff;
  background: ${blue};
  border: 0;
  border-radius: 5px;
  -webkit-text-stroke: 0.3px #fff;
`;

const Filters = styled.div`
  display: flex;
  flex: none;
  align-items: center;
  height: 64px;
  padding: 0 0 0 7px;
  background: #fff;
`;

const FilterLabel = styled.label<{ $w: number }>`
  width: ${(p) => p.$w}px;
  margin-top: -4px;
  font-size: 18.4px;
  line-height: 28px;
  white-space: nowrap;
  color: #777;
`;

const Select = styled.div`
  display: flex;
  align-items: center;
  width: 372px;
  height: 51px;
  margin-right: 14px;
  padding: 1px 0 0 13px;
  font-size: 18.3px;
  color: #777;
  border: 1.3px solid #ccc;
  border-radius: 5px;
  span { flex: 1; }
  svg { display: block; margin: 0 16px; }
`;

const Separator = styled.i`
  width: 1.4px;
  height: 27px;
  background: #ccc;
`;

const CollapseFilters = styled.span`
  display: flex;
  margin: 0 0 2px 8px;
  color: ${blue};
`;

const Board = styled.main`
  flex: 1;
  display: flex;
  flex-direction: column;
  padding: 18px 749px 0 751px;
`;

const Columns = styled.div`
  display: grid;
  grid-template-columns: 1029px 1029px;
  gap: 24px;
  height: 454px;
`;

const Column = styled.div`
  display: flex;
  flex-direction: column;
  gap: 12px;
`;

const Card = styled.section<{ $h: number; $pad?: string; $mt?: number }>`
  flex: none;
  height: ${(p) => p.$h}px;
  margin-top: ${(p) => p.$mt ?? 0}px;
  padding: ${(p) => p.$pad ?? "0 10px"};
  background: #fff;
  border-radius: 7px;
`;

const Heading = styled.h2<{ $size: number; $lh: number }>`
  margin: 0;
  font-size: ${(p) => p.$size}px;
  line-height: ${(p) => p.$lh}px;
  font-weight: 700;
  white-space: nowrap;
`;

const Paragraph = styled.p`
  margin: 42px 0 0;
  font-size: 20px;
  line-height: 30.2px;
  white-space: nowrap;
`;

const Line = styled.span<{ $track: number }>`
  display: block;
  letter-spacing: ${(p) => p.$track}px;
`;

const Facts = styled.ul`
  margin: 10px 0 0;
  padding-left: 38px;
  font-size: 19.8px;
  font-weight: 700;
  line-height: 31px;
`;

const Contents = styled.nav`
  display: flex;
  flex-direction: column;
  height: 184px;
  padding: 7px 6.5px;
  border: 1.4px solid #ccc;
  font-size: 18.6px;
  line-height: 28px;
  white-space: pre;
  a { color: ${blue}; }
  b { font-size: 18.2px; }
`;

const MapFrame = styled.div`
  position: relative;
  height: 1004px;
  overflow: hidden;
`;

const overlay = css`
  position: absolute;
  background: #fff;
`;

const ZoomControls = styled.div`
  ${overlay}
  left: 13px;
  top: 13px;
  display: flex;
  flex-direction: column;
  width: 39px;
  height: 116px;
  border-radius: 5px;
  box-shadow: 0 0 0 2.5px rgba(0, 0, 0, 0.1);
`;

const ZoomButton = styled.button`
  display: flex;
  flex: 1;
  align-items: center;
  justify-content: center;
  padding: 0;
  background: none;
  border: 0;
  & + & { border-top: 1.3px solid #ddd; }
`;

const LayersButton = styled.button`
  ${overlay}
  right: 13px;
  top: 13px;
  display: flex;
  align-items: center;
  justify-content: center;
  width: 39px;
  height: 38px;
  padding: 0;
  color: #555;
  border: 1.3px solid #b6bcc2;
  border-radius: 5px;
`;

const ScaleBar = styled.div`
  ${overlay}
  left: 13px;
  bottom: 15px;
  width: 124px;
  height: 29px;
  padding: 0 7px;
  font-size: 13.4px;
  line-height: 27px;
  color: #333;
  background: rgba(255, 255, 255, 0.75);
  border: 2.5px solid #333;
  border-top: 0;
`;

const Attribution = styled.div`
  ${overlay}
  right: 0;
  bottom: 0;
  height: 24px;
  padding: 0 6.5px 0 8px;
  font-size: 16.2px;
  line-height: 25px;
  white-space: nowrap;
  color: #333;
  background: rgba(255, 255, 255, 0.22);
`;

const Legend = styled.aside`
  ${overlay}
  right: 13px;
  bottom: 47px;
  width: 206px;
  height: 344px;
  padding: 9px 12px;
  font-size: 16.35px;
  line-height: 24px;
  white-space: nowrap;
  background: rgba(255, 255, 255, 0.82);
  border-radius: 6px;
  box-shadow: 0 4px 24px rgba(0, 0, 0, 0.28);
`;

const LegendTitle = styled.div`
  font-size: 16px;
  font-weight: 700;
  & ~ & { margin-top: 7px; }
`;

const LegendRow = styled.div`
  display: flex;
  align-items: center;
  gap: 5.5px;
  padding-left: 4px;
`;

const Swatch = styled.i<{ $c: string; $round?: boolean }>`
  flex: none;
  width: 13px;
  height: 13px;
  margin-top: -2px;
  background: ${(p) => p.$c};
  border-radius: ${(p) => (p.$round ? "50%" : "0")};
`;

const Collapse = styled.span`
  position: absolute;
  right: 2px;
  bottom: 4px;
  display: flex;
  color: ${blue};
`;

const Chevron = () => (
  <svg width="16" height="10" viewBox="0 0 16 10" fill="none" stroke="#c4c4c4" strokeWidth="2.4" strokeLinecap="round">
    <path d="M2 1.5l6 6 6-6" />
  </svg>
);

const filters: [string, number][] = [["CAP:", 48.5], ["WASH Focus:", 121.5], ["Interventions Type:", 162], ["Infrastructures Type:", 177]];
const statuses: [string, string][] = [["Planned", "#2d6a3e"], ["In-process", "#e68a3d"], ["Closed", "#98202c"], ["None", "#d8d8d8"]];
const interventions: [string, string][] = [
  ["New construction", "#d6372f"], ["Rehabilitation", "#4880b7"], ["Water treatment", "#69ae57"], ["Sanitation mobilization", "#9255a2"],
  ["Capacity building", "#ef8634"], ["Latrine block", "#fffe5f"], ["None", "#a9a9a9"],
];

export default function App() {
  return (
    <Page>
      <Global />
      <Navbar>
        <Brand>
          <svg width="37" height="31" viewBox="0 0 37 31" fill="#5388b4">
            <path d="M0 22h6v9H0zM8 15h5v16H8zM15 7h6v24h-6zM23 0h5v31h-5zM31 20h5.500v11H31z" />
          </svg>
          <span>m</span>Water
        </Brand>
        <NavItem $x={100}><FaLocationDot size={17.5} />Sites<Caret /></NavItem>
        <NavItem $x={114}><FaTableList size={19} />Surveys</NavItem>
        <NavItem $x={176} $active><FaRegChartBar size={20} />Visualizations<Caret /></NavItem>
        <NavItem $x={129}><FaGear size={18.500} />Manage<Caret /></NavItem>
        <NavItem $x={110}><FaCircleCheck size={18.500} />Indicators</NavItem>
        <Grow />
        <NavItem $x={80} $color="#275c13"><FaBook size={18.500} />Help</NavItem>
        <NavItem $x={40} $gap={3}><FaBell size={18.500} /><Caret /></NavItem>
        <NavItem $x={162}><FaUser size={18.500} />alexandro.disla<Caret /></NavItem>
      </Navbar>

      <TitleBar>
        <PageTitle>Commune Action Plan (CAP)<FaCircleInfo size={21} /></PageTitle>
        <Tab $active>Commune Action Plan</Tab>
        <Tab>Map</Tab>
        <AddTab><FaPlus size={18} /></AddTab>
        <Grow />
        <Action $w={111}><FaRegClone size={16.500} />Duplicate</Action>
        <Action $w={85}><FaShare size={16.500} />Share</Action>
        <Action $w={114} $gap={7}><FaPencil size={16.500} />Edit Tabs</Action>
        <Action $w={96} $gap={7}><FaExpandArrowsAlt size={16} />Fullscreen</Action>
      </TitleBar>

      <Toolbar>
        <Action $w={75.500}><FaPrint size={16.500} />Print</Action>
        <Action $w={97.500}><FaArrowsRotate size={16.500} />Refresh</Action>
        <Action $w={137}><FaArrowUpRightFromSquare size={16.500} />Export as PDF</Action>
        <EditButton><FaPencil size={16} />Edit</EditButton>
      </Toolbar>

      <Filters>
        {filters.map(([name, w]) => (
          <React.Fragment key={name}>
            <FilterLabel $w={w}>{name}</FilterLabel>
            <Select><span>All</span><Separator /><Chevron /></Select>
          </React.Fragment>
        ))}
        <CollapseFilters><FaAnglesUp size={15} /></CollapseFilters>
      </Filters>

      <Board>
        <Columns>
          <Column>
            <Card $h={186} $pad="12px 10px 0">
              <Heading $size={25.15} $lh={30}>Commune Action Plan (CAP):</Heading>
              <Paragraph>
                <Line $track={0.06}>It is a set of WASH activities planned in conjunction with Haiti's Water Officials (DINEPA), Local Authorities, Haiti</Line>
                <Line $track={0.08}>Outreach and other partners using data and a simple decision making framework. Each CAP is created to take a</Line>
                <Line $track={0.18}>commune from its current access level to about 90 to 100% access to potable/functioning water infrastructure.</Line>
              </Paragraph>
            </Card>
            <Card $h={155} $pad="16px 10px 0">
              <Heading $size={30} $lh={36}>Demographics:</Heading>
              <Facts>
                <li># of Household: 479,135.</li>
                <li># of People: 2,635,243.</li>
              </Facts>
            </Card>
          </Column>
          <Column>
            <Card $h={71}><Heading $size={33.5} $lh={72}>Commune Action Plan</Heading></Card>
            <Card $h={208} $pad="12px 9px 12px 12px">
              <Contents>
                <b>Contents</b>
                <a>Commune Action Plan (CAP):</a>
                <a>1. CAP Status and Access Type</a>
                <a>2. Wash Focus, Intervention &amp; Infrastructure Types</a>
                <a>3. Interventions Status</a>
                <a>{"4. Access baseline vs Projected  - Summary"}</a>
              </Contents>
            </Card>
          </Column>
        </Columns>

        <Column>
          <Card $h={53}><Heading $size={25.2} $lh={54}>1. CAP Status and Access Type</Heading></Card>
          <Card $h={1052} $pad="24px">
            <MapFrame>
              <HaitiMap />
              <ZoomControls>
                <ZoomButton>
                  <svg width="18" height="18" viewBox="0 0 18 18" stroke="#333" strokeWidth="3.2" strokeLinecap="round"><path d="M9 2.500v13M2.500 9h13" /></svg>
                </ZoomButton>
                <ZoomButton>
                  <svg width="18" height="18" viewBox="0 0 18 18" stroke="#333" strokeWidth="3.2" strokeLinecap="round"><path d="M2.500 9h13" /></svg>
                </ZoomButton>
                <ZoomButton>
                  <svg width="14" height="26" viewBox="0 0 14 26"><path d="M7 1l5 11H2z" fill="#333" /><path d="M7 25l5-10H2z" fill="#ccc" /></svg>
                </ZoomButton>
              </ZoomControls>
              <LayersButton><FaLayerGroup size={19} /></LayersButton>
              <ScaleBar>30 km</ScaleBar>
              <Attribution>© MapTiler © OpenStreetMap</Attribution>
              <Legend>
                <LegendTitle>CAP Status</LegendTitle>
                {statuses.map(([t, c]) => <LegendRow key={t}><Swatch $c={c} />{t}</LegendRow>)}
                <LegendTitle>Intervention</LegendTitle>
                {interventions.map(([t, c]) => <LegendRow key={t}><Swatch $c={c} $round />{t}</LegendRow>)}
                <Collapse><FaAnglesRight size={13} /></Collapse>
              </Legend>
            </MapFrame>
          </Card>
        </Column>
        <Card $h={200} $mt={92} />
      </Board>
    </Page>
  );
}
